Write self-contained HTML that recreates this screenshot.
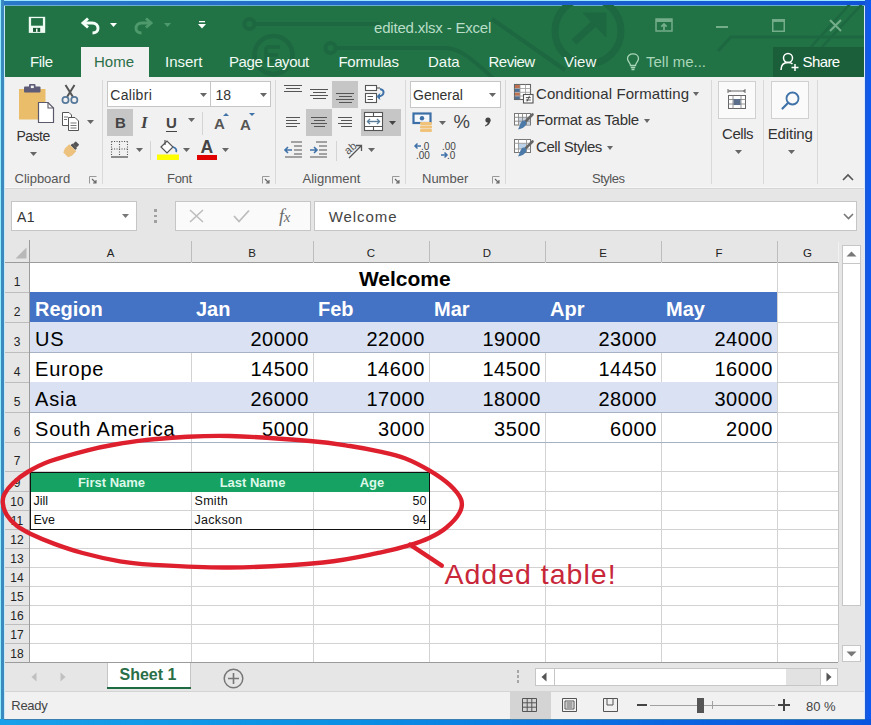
<!DOCTYPE html><html><head><meta charset="utf-8"><style>
*{margin:0;padding:0;box-sizing:border-box}
html,body{width:871px;height:725px;overflow:hidden}
body{position:relative;font-family:"Liberation Sans",sans-serif;background:#1a7fe0}
.t{position:absolute;line-height:1;white-space:nowrap}
.r{position:absolute}
svg{position:absolute;overflow:visible}
</style></head><body><div class="r" style="left:0px;top:0px;width:871px;height:5px;background:linear-gradient(90deg,#2a78c8,#1f66c8 50%,#0f52d8);"></div>
<div class="r" style="left:0px;top:0px;width:871px;height:1px;background:#9ee8ff;"></div>
<div class="r" style="left:0px;top:0px;width:4px;height:725px;background:#3a8ac0;"></div>
<div class="r" style="left:0px;top:0px;width:1px;height:725px;background:#90ecff;"></div>
<div class="r" style="left:865px;top:0px;width:6px;height:725px;background:linear-gradient(90deg,#1a5ad8,#0a5af8);"></div>
<div class="r" style="left:0px;top:719px;width:871px;height:6px;background:linear-gradient(90deg,#18a0ea,#0a90e4 40%,#0a62e0 80%,#0a55e0);"></div>
<div class="r" style="left:4px;top:719px;width:861px;height:1px;background:#3a7fb0;"></div>
<div class="r" style="left:4px;top:5px;width:861px;height:714px;background:#f1f1f1;"></div>
<div class="r" style="left:4px;top:5px;width:1px;height:714px;background:#c8e8f8;"></div>
<div class="r" style="left:864px;top:5px;width:1px;height:714px;background:#d8e8fc;"></div>
<div class="r" style="left:5px;top:6px;width:859px;height:71px;background:#217346;"></div>
<div class="r" style="left:4px;top:5px;width:861px;height:1px;background:#6aaed0;"></div>
<svg style="left:0;top:0" width="871" height="77" viewBox="0 0 871 77">
<defs><clipPath id="tb"><rect x="4" y="5" width="860" height="72"/></clipPath></defs>
<g fill="none" stroke="#1d6840" stroke-width="4" clip-path="url(#tb)">
<circle cx="249.5" cy="24" r="5"/>
<line x1="254.5" y1="24" x2="380" y2="24"/>
<circle cx="330.5" cy="48" r="5"/>
<path d="M335.5 48 H444 C458 48 468 56 483 69 L495 80"/>
<path d="M492 19 L565 70"/>
<circle cx="273.5" cy="55" r="19" stroke-width="4.5"/>
<path d="M266 47 h14 M266 55 h12 M266 47 v14 h14" stroke-width="3.5"/>
<circle cx="588" cy="31" r="33" stroke-width="7"/>
<path d="M574 42 L598 20" stroke-width="7"/>
<path d="M583 13 H606 V37 Z" fill="#1d6840" stroke-width="1"/>
<path d="M718 51 L731 37 H864" stroke-width="3"/>
<path d="M811 47 L850 4 M822 47 L862 4" stroke-width="2.5"/>
</g></svg>
<svg style="left:28px;top:16px" width="18" height="18" viewBox="0 0 18 18">
<rect x="0.8" y="0.8" width="16.4" height="16.1" fill="#eefbf2"/>
<rect x="3.1" y="2.1" width="11.8" height="7.6" fill="#217346"/>
<rect x="5" y="11.9" width="7.2" height="4" fill="#1b5a37"/>
<rect x="8" y="12.6" width="1.5" height="3.3" fill="#eefbf2"/>
</svg>
<svg style="left:80px;top:17px" width="20" height="17" viewBox="0 0 20 17">
<path d="M4 6 H12 C16 6 18 8.5 18 11.5 C18 14.5 15.5 16 12.5 16" fill="none" stroke="#f4fff8" stroke-width="2.9"/>
<path d="M8 1.5 L3 6 L8 10.5" fill="none" stroke="#f4fff8" stroke-width="2.9"/>
</svg>
<svg style="left:110px;top:22.5px" width="7" height="5" viewBox="0 0 7 5"><path d="M0 0 H7 L3.5 4 Z" fill="#fff"/></svg>
<svg style="left:134px;top:17px" width="20" height="17" viewBox="0 0 20 17">
<path d="M16 6 H8 C4 6 2 8.5 2 11.5 C2 14.5 4.5 16 7.5 16" fill="none" stroke="#4f9a6c" stroke-width="2.9"/>
<path d="M12 1.5 L17 6 L12 10.5" fill="none" stroke="#4f9a6c" stroke-width="2.9"/>
</svg>
<svg style="left:164px;top:22.5px" width="7" height="5" viewBox="0 0 7 5"><path d="M0 0 H7 L3.5 4 Z" fill="#4f9a6c"/></svg>
<svg style="left:198px;top:21px" width="8" height="8" viewBox="0 0 8 8"><rect x="1" y="0" width="6" height="1.3" fill="#fff"/><path d="M0 3 H8 L4 7.5 Z" fill="#fff"/></svg>
<div class="t" style="top:20.30px;font-size:15px;color:#b9ddc6;font-weight:normal;letter-spacing:-0.2px;left:374px;">edited.xlsx - Excel</div>
<svg style="left:655px;top:18px" width="18" height="14" viewBox="0 0 18 14">
<rect x="1" y="1" width="16" height="12" fill="none" stroke="#74ad8a" stroke-width="1.5"/>
<rect x="1" y="1" width="16" height="3" fill="#74ad8a"/>
<path d="M9 6 V12 M6.3 8.7 L9 6 L11.7 8.7" fill="none" stroke="#74ad8a" stroke-width="1.8"/>
</svg>
<div class="r" style="left:715.5px;top:26.3px;width:12px;height:2px;background:#74ad8a;"></div>
<svg style="left:771.5px;top:18.5px" width="13" height="13" viewBox="0 0 13 13"><rect x="0.75" y="0.75" width="11.5" height="11.5" fill="none" stroke="#74ad8a" stroke-width="1.5"/><rect x="0.75" y="0.75" width="11.5" height="2.2" fill="#74ad8a"/></svg>
<svg style="left:828.5px;top:18.5px" width="13" height="13" viewBox="0 0 13 13"><path d="M1 1 L12 12 M12 1 L1 12" stroke="#74ad8a" stroke-width="2"/></svg>
<div class="r" style="left:81px;top:47px;width:68px;height:30px;background:#f1f1f1;"></div>
<div class="t" style="top:54.30px;font-size:15px;color:#f2faf4;font-weight:normal;letter-spacing:-0.4px;left:30px;">File</div>
<div class="t" style="top:54.30px;font-size:15px;color:#2b6e47;font-weight:normal;left:94px;">Home</div>
<div class="t" style="top:54.30px;font-size:15px;color:#f2faf4;font-weight:normal;left:165px;">Insert</div>
<div class="t" style="top:54.30px;font-size:15px;color:#f2faf4;font-weight:normal;letter-spacing:-0.4px;left:229px;">Page Layout</div>
<div class="t" style="top:54.30px;font-size:15px;color:#f2faf4;font-weight:normal;letter-spacing:-0.3px;left:338.5px;">Formulas</div>
<div class="t" style="top:54.30px;font-size:15px;color:#f2faf4;font-weight:normal;left:428px;">Data</div>
<div class="t" style="top:54.30px;font-size:15px;color:#f2faf4;font-weight:normal;letter-spacing:-0.5px;left:488.5px;">Review</div>
<div class="t" style="top:54.30px;font-size:15px;color:#f2faf4;font-weight:normal;left:564px;">View</div>
<svg style="left:626px;top:53px" width="14" height="18" viewBox="0 0 14 18">
<path d="M4.5 12.5 C4.5 10 1.5 8.5 1.5 5.5 C1.5 2.8 3.8 0.8 7 0.8 C10.2 0.8 12.5 2.8 12.5 5.5 C12.5 8.5 9.5 10 9.5 12.5 Z" fill="none" stroke="#a9d6b8" stroke-width="1.3"/>
<path d="M4.8 14.5 H9.2 M5.5 16.5 H8.5" stroke="#a9d6b8" stroke-width="1.3"/>
</svg>
<div class="t" style="top:54.30px;font-size:15px;color:#a9d6b8;font-weight:normal;left:646px;">Tell me...</div>
<div class="r" style="left:773px;top:47px;width:91px;height:30px;background:#1b5f3a;"></div>
<svg style="left:780px;top:52px" width="20" height="20" viewBox="0 0 20 20">
<circle cx="8" cy="6" r="4.5" fill="none" stroke="#fff" stroke-width="1.5"/>
<path d="M1 18 C1 13 4 10.5 8 10.5 C10 10.5 11.5 11 12.5 12" fill="none" stroke="#fff" stroke-width="1.5"/>
<path d="M15 12 V19 M11.5 15.5 H18.5" stroke="#fff" stroke-width="1.5"/>
</svg>
<div class="t" style="top:54.30px;font-size:15px;color:#ffffff;font-weight:normal;letter-spacing:-0.6px;left:802.5px;">Share</div>
<div class="r" style="left:5px;top:189px;width:859px;height:53px;background:#e6e6e6;"></div>
<div class="r" style="left:5px;top:187px;width:859px;height:1px;background:#f7f7f7;"></div>
<div class="r" style="left:5px;top:188px;width:859px;height:1px;background:#d5d5d5;"></div>
<div class="r" style="left:102px;top:80px;width:1px;height:104px;background:#d9d9d9;"></div>
<div class="r" style="left:275px;top:80px;width:1px;height:104px;background:#d9d9d9;"></div>
<div class="r" style="left:405px;top:80px;width:1px;height:104px;background:#d9d9d9;"></div>
<div class="r" style="left:505px;top:80px;width:1px;height:104px;background:#d9d9d9;"></div>
<div class="r" style="left:711px;top:80px;width:1px;height:104px;background:#d9d9d9;"></div>
<div class="r" style="left:763px;top:80px;width:1px;height:104px;background:#d9d9d9;"></div>
<div class="r" style="left:817px;top:80px;width:1px;height:104px;background:#d9d9d9;"></div>
<div class="t" style="top:172.00px;font-size:13px;color:#555;font-weight:normal;left:14.5px;">Clipboard</div>
<div class="t" style="top:172.00px;font-size:13px;color:#555;font-weight:normal;letter-spacing:-0.3px;left:167px;">Font</div>
<div class="t" style="top:172.00px;font-size:13px;color:#555;font-weight:normal;left:302.5px;">Alignment</div>
<div class="t" style="top:172.00px;font-size:13px;color:#555;font-weight:normal;left:422px;">Number</div>
<div class="t" style="top:172.00px;font-size:13px;color:#555;font-weight:normal;letter-spacing:-0.5px;left:592px;">Styles</div>
<div class="t" style="top:182.15px;font-size:1px;color:#555;font-weight:normal;left:92px;"></div>
<svg style="left:89px;top:176px" width="8" height="8" viewBox="0 0 8 8"><path d="M0.5 7.5 V0.5 H7.5" fill="none" stroke="#999" stroke-width="1"/><path d="M3 3 L7 7 M7 4 V7 H4" fill="none" stroke="#666" stroke-width="1.1"/></svg>
<svg style="left:262px;top:176px" width="8" height="8" viewBox="0 0 8 8"><path d="M0.5 7.5 V0.5 H7.5" fill="none" stroke="#999" stroke-width="1"/><path d="M3 3 L7 7 M7 4 V7 H4" fill="none" stroke="#666" stroke-width="1.1"/></svg>
<svg style="left:392px;top:176px" width="8" height="8" viewBox="0 0 8 8"><path d="M0.5 7.5 V0.5 H7.5" fill="none" stroke="#999" stroke-width="1"/><path d="M3 3 L7 7 M7 4 V7 H4" fill="none" stroke="#666" stroke-width="1.1"/></svg>
<svg style="left:492px;top:176px" width="8" height="8" viewBox="0 0 8 8"><path d="M0.5 7.5 V0.5 H7.5" fill="none" stroke="#999" stroke-width="1"/><path d="M3 3 L7 7 M7 4 V7 H4" fill="none" stroke="#666" stroke-width="1.1"/></svg>
<svg style="left:18px;top:84px" width="37" height="40" viewBox="0 0 37 40">
<rect x="1" y="5" width="26.5" height="30.5" fill="#e9bd6a"/>
<rect x="6" y="2.5" width="16.5" height="6" rx="1" fill="#5e5b78"/>
<rect x="11" y="0" width="6.5" height="5" rx="1" fill="#5e5b78"/>
<rect x="12.8" y="1.6" width="3" height="2.5" fill="#f3f3f3"/>
<path d="M20.5 18.5 H30 L35.5 24 V38.5 H20.5 Z" fill="#ffffff" stroke="#5a5a6a" stroke-width="1.2"/>
<path d="M30 18.5 V24 H35.5" fill="none" stroke="#5a5a6a" stroke-width="1.1"/>
</svg>
<div class="t" style="top:128.65px;font-size:14px;color:#333;font-weight:normal;letter-spacing:-0.5px;left:16.5px;">Paste</div>
<svg style="left:30px;top:152px" width="7" height="4" viewBox="0 0 7 4"><path d="M0 0 H7 L3.5 4 Z" fill="#666"/></svg>
<svg style="left:61px;top:84px" width="18" height="20" viewBox="0 0 18 20">
<path d="M4.5 1 L12 13 M13.5 1 L6 13" stroke="#555" stroke-width="2"/>
<circle cx="4.5" cy="16" r="3.1" fill="none" stroke="#56789a" stroke-width="1.7"/>
<circle cx="13.3" cy="16" r="3.1" fill="none" stroke="#56789a" stroke-width="1.7"/>
</svg>
<svg style="left:62px;top:112px" width="18" height="19" viewBox="0 0 18 19">
<path d="M0.5 0.5 H7 L9.5 3 V13.5 H0.5 Z" fill="#fff" stroke="#555" stroke-width="1"/>
<path d="M6.5 5.5 H13 L16.5 9 V18.5 H6.5 Z" fill="#fff" stroke="#555" stroke-width="1"/>
<path d="M2 5 H6 M2 7.5 H5 M8.5 11 H14.5 M8.5 13.5 H14.5 M8.5 16 H14.5" stroke="#666" stroke-width="0.9"/>
</svg>
<svg style="left:87px;top:120px" width="7" height="4" viewBox="0 0 7 4"><path d="M0 0 H7 L3.5 4 Z" fill="#666"/></svg>
<svg style="left:63px;top:142px" width="16" height="15" viewBox="0 0 19 18">
<g transform="rotate(45 9.5 9)">
<rect x="6.5" y="-2" width="6" height="5" rx="0.8" fill="#555"/>
<rect x="5.5" y="2.8" width="8" height="3" fill="#555"/>
<path d="M3.5 6 H15.5 V13.5 L13.5 18 H5.5 L3.5 13.5 Z" fill="#ecc27e"/>
</g>
</svg>
<div class="r" style="left:107px;top:81px;width:104px;height:26px;background:#ffffff;border:1px solid #c6c6c6;"></div>
<div class="r" style="left:210px;top:81px;width:61px;height:26px;background:#ffffff;border:1px solid #c6c6c6;"></div>
<div class="t" style="top:88.15px;font-size:14px;color:#333;font-weight:normal;letter-spacing:0.3px;left:110.3px;">Calibri</div>
<svg style="left:200px;top:93px" width="7" height="4" viewBox="0 0 7 4"><path d="M0 0 H7 L3.5 4 Z" fill="#666"/></svg>
<div class="t" style="top:88.15px;font-size:14px;color:#333;font-weight:normal;left:215.5px;">18</div>
<svg style="left:259.5px;top:93px" width="7" height="4" viewBox="0 0 7 4"><path d="M0 0 H7 L3.5 4 Z" fill="#666"/></svg>
<div class="r" style="left:107px;top:109px;width:26px;height:27px;background:#c6c6c6;"></div>
<div class="t" style="top:115.10px;font-size:15px;color:#444;font-weight:bold;left:115px;">B</div>
<div class="t" style="top:113.61px;font-size:17px;color:#444;font-weight:bold;left:141px;font-family:'Liberation Serif',serif;"><i>I</i></div>
<div class="t" style="top:115.10px;font-size:15px;color:#444;font-weight:bold;left:166px;">U</div>
<div class="r" style="left:166px;top:130.5px;width:11px;height:1.5px;background:#444;"></div>
<svg style="left:188px;top:118px" width="7" height="4" viewBox="0 0 7 4"><path d="M0 0 H7 L3.5 4 Z" fill="#666"/></svg>
<div class="r" style="left:202px;top:112px;width:1px;height:23px;background:#d4d4d4;"></div>
<div class="t" style="top:115.80px;font-size:15px;color:#555;font-weight:bold;left:214px;">A</div>
<svg style="left:223px;top:113px" width="6" height="3" viewBox="0 0 6 3"><path d="M0 3 H6 L3 0 Z" fill="#3f72a8"/></svg>
<div class="t" style="top:116.80px;font-size:15px;color:#555;font-weight:bold;left:240px;">A</div>
<svg style="left:249px;top:113px" width="6" height="3" viewBox="0 0 6 3"><path d="M0 0 H6 L3 3 Z" fill="#3f72a8"/></svg>
<svg style="left:110px;top:140px" width="19" height="18" viewBox="0 0 19 18">
<path d="M1.5 1.5 H17.5 M1.5 1.5 V16.5 M17.5 1.5 V16.5 M9.5 1.5 V16.5 M1.5 9 H17.5" fill="none" stroke="#555" stroke-width="1.1" stroke-dasharray="1.1 1.4"/>
<path d="M1 17 H18" stroke="#555" stroke-width="1.3"/>
</svg>
<svg style="left:135.5px;top:148px" width="7" height="4" viewBox="0 0 7 4"><path d="M0 0 H7 L3.5 4 Z" fill="#666"/></svg>
<div class="r" style="left:150px;top:141px;width:1px;height:19px;background:#d4d4d4;"></div>
<svg style="left:157px;top:139px" width="23" height="22" viewBox="0 0 23 22">
<path d="M4 8 L10 2 L16 8 L10 14 Z" fill="#fff" stroke="#555" stroke-width="1.2"/>
<path d="M8 1 V6" stroke="#555" stroke-width="1.2"/>
<path d="M16 8 C19 9 20 11 19 13" fill="none" stroke="#3f72a8" stroke-width="1.8"/>
<rect x="0" y="15.5" width="22" height="5.5" fill="#ffff00"/>
</svg>
<svg style="left:183px;top:148px" width="7" height="4" viewBox="0 0 7 4"><path d="M0 0 H7 L3.5 4 Z" fill="#666"/></svg>
<div class="t" style="top:138.69px;font-size:17.5px;color:#444;font-weight:bold;left:200.5px;">A</div>
<div class="r" style="left:197px;top:155px;width:20px;height:5px;background:#e00000;"></div>
<svg style="left:222px;top:148px" width="7" height="4" viewBox="0 0 7 4"><path d="M0 0 H7 L3.5 4 Z" fill="#666"/></svg>
<div class="r" style="left:332px;top:81px;width:26px;height:27px;background:#c6c6c6;"></div>
<div class="r" style="left:306px;top:109px;width:26px;height:27px;background:#c6c6c6;"></div>
<div class="r" style="left:361px;top:109px;width:40px;height:27px;background:#c6c6c6;"></div>
<div class="r" style="left:284px;top:85.0px;width:18px;height:1.2px;background:#555;"></div>
<div class="r" style="left:286px;top:88.1px;width:14px;height:1.2px;background:#555;"></div>
<div class="r" style="left:284px;top:91.2px;width:18px;height:1.2px;background:#555;"></div>
<div class="r" style="left:310px;top:89.0px;width:18px;height:1.2px;background:#555;"></div>
<div class="r" style="left:312.5px;top:92.05px;width:13px;height:1.2px;background:#555;"></div>
<div class="r" style="left:310px;top:95.1px;width:18px;height:1.2px;background:#555;"></div>
<div class="r" style="left:312.5px;top:98.15px;width:13px;height:1.2px;background:#555;"></div>
<div class="r" style="left:336px;top:93.0px;width:18px;height:1.2px;background:#555;"></div>
<div class="r" style="left:338.5px;top:96.05px;width:13px;height:1.2px;background:#555;"></div>
<div class="r" style="left:336px;top:99.1px;width:18px;height:1.2px;background:#555;"></div>
<div class="r" style="left:338.5px;top:102.15px;width:13px;height:1.2px;background:#555;"></div>
<svg style="left:364px;top:84px" width="22" height="20" viewBox="0 0 22 20">
<rect x="1.5" y="1.5" width="11" height="5" fill="#fff" stroke="#555" stroke-width="1.1"/>
<rect x="1.5" y="9.5" width="11" height="9" fill="#fff" stroke="#555" stroke-width="1.1"/>
<path d="M12.5 4 H16" stroke="#555" stroke-width="1.1"/>
<path d="M3.5 12.5 H9 M3.5 15.5 H9" stroke="#555" stroke-width="1"/>
<path d="M16 5 C21 6 21 12 14 12.5" fill="none" stroke="#3f72a8" stroke-width="2"/>
<path d="M16 9.5 L13 12.5 L16 15.5" fill="#3f72a8" stroke="#3f72a8" stroke-width="1"/>
</svg>
<div class="r" style="left:286px;top:117.0px;width:14px;height:1.2px;background:#555;"></div>
<div class="r" style="left:286px;top:120.05px;width:11px;height:1.2px;background:#555;"></div>
<div class="r" style="left:286px;top:123.1px;width:14px;height:1.2px;background:#555;"></div>
<div class="r" style="left:286px;top:126.15px;width:11px;height:1.2px;background:#555;"></div>
<div class="r" style="left:311px;top:117.0px;width:16px;height:1.2px;background:#555;"></div>
<div class="r" style="left:313.5px;top:120.05px;width:11px;height:1.2px;background:#555;"></div>
<div class="r" style="left:311px;top:123.1px;width:16px;height:1.2px;background:#555;"></div>
<div class="r" style="left:313.5px;top:126.15px;width:11px;height:1.2px;background:#555;"></div>
<div class="r" style="left:338px;top:117.0px;width:14px;height:1.2px;background:#555;"></div>
<div class="r" style="left:341px;top:120.05px;width:11px;height:1.2px;background:#555;"></div>
<div class="r" style="left:338px;top:123.1px;width:14px;height:1.2px;background:#555;"></div>
<div class="r" style="left:341px;top:126.15px;width:11px;height:1.2px;background:#555;"></div>
<svg style="left:364px;top:112px" width="20" height="19" viewBox="0 0 20 19">
<rect x="0.5" y="0.5" width="18" height="18" fill="#fff" stroke="#555" stroke-width="1.1"/>
<path d="M0.5 4.5 H18.5 M0.5 14.5 H18.5 M9.5 0.5 V4.5 M9.5 14.5 V18.5" stroke="#555" stroke-width="1.1"/>
<path d="M3.5 9.5 H15.5" stroke="#5a7f9c" stroke-width="1.4"/>
<path d="M6 7 L3.5 9.5 L6 12 M13 7 L15.5 9.5 L13 12" fill="none" stroke="#5a7f9c" stroke-width="1.4"/>
</svg>
<svg style="left:389px;top:121px" width="7" height="4" viewBox="0 0 7 4"><path d="M0 0 H7 L3.5 4 Z" fill="#444"/></svg>
<svg style="left:284px;top:141px" width="19" height="17" viewBox="0 0 19 17">
<path d="M7 1 H18 M10 5 H18 M10 9 H18 M10 13 H18 M1 16 H18" stroke="#555" stroke-width="1.1"/>
<path d="M1 9 H8 M4 6 L1 9 L4 12" fill="none" stroke="#3f72a8" stroke-width="1.6"/>
</svg>
<svg style="left:309px;top:141px" width="19" height="17" viewBox="0 0 19 17">
<path d="M7 1 H18 M10 5 H18 M10 9 H18 M10 13 H18 M1 16 H18" stroke="#555" stroke-width="1.1"/>
<path d="M1 9 H8 M5 6 L8 9 L5 12" fill="none" stroke="#3f72a8" stroke-width="1.6"/>
</svg>
<div class="r" style="left:336px;top:141px;width:1px;height:20px;background:#d4d4d4;"></div>
<svg style="left:344px;top:140px" width="21" height="20" viewBox="0 0 21 20">
<text x="0" y="12" font-family="Liberation Sans" font-size="11" fill="#555" transform="rotate(-40 6 8)">ab</text>
<path d="M5 18 L17 6 M12 5.5 H17.5 V11" fill="none" stroke="#555" stroke-width="1.3"/>
</svg>
<svg style="left:368px;top:148px" width="7" height="4" viewBox="0 0 7 4"><path d="M0 0 H7 L3.5 4 Z" fill="#666"/></svg>
<div class="r" style="left:410px;top:81px;width:91px;height:27px;background:#ffffff;border:1px solid #c6c6c6;"></div>
<div class="t" style="top:88.15px;font-size:14px;color:#333;font-weight:normal;left:413px;">General</div>
<svg style="left:489px;top:93px" width="7" height="4" viewBox="0 0 7 4"><path d="M0 0 H7 L3.5 4 Z" fill="#666"/></svg>
<svg style="left:412px;top:112px" width="22" height="21" viewBox="0 0 22 21">
<rect x="1.5" y="1.5" width="17" height="9.5" fill="#f4f7fb" stroke="#3c6fa6" stroke-width="2.2"/>
<circle cx="10" cy="6.3" r="2.2" fill="#3c6fa6"/>
<rect x="8" y="10" width="12" height="3" rx="1.2" fill="#f1c27a"/>
<rect x="8" y="13.5" width="12" height="3" rx="1.2" fill="#f1c27a"/>
<rect x="8" y="17" width="12" height="3" rx="1.2" fill="#f1c27a"/>
</svg>
<svg style="left:439px;top:121px" width="7" height="4" viewBox="0 0 7 4"><path d="M0 0 H7 L3.5 4 Z" fill="#666"/></svg>
<div class="t" style="top:113.34px;font-size:18.5px;color:#444;font-weight:normal;left:453.5px;">%</div>
<svg style="left:484px;top:117px" width="7" height="10" viewBox="0 0 7 10"><circle cx="4" cy="3" r="2.6" fill="#444"/><path d="M6.4 3 C6.4 6.5 4.5 8.5 1.2 9.6 L1 8.5 C3 7.5 4 6 4 4.5 Z" fill="#444"/></svg>
<svg style="left:414px;top:141px" width="17" height="19" viewBox="0 0 17 19">
<path d="M1 5 H7 M3.5 2.5 L1 5 L3.5 7.5" fill="none" stroke="#3f72a8" stroke-width="1.5"/>
<text x="7" y="9" font-family="Liberation Sans" font-size="10" fill="#444">.0</text>
<text x="2" y="18" font-family="Liberation Sans" font-size="10" fill="#444">.00</text>
</svg>
<svg style="left:440px;top:141px" width="17" height="19" viewBox="0 0 17 19">
<text x="2" y="9" font-family="Liberation Sans" font-size="10" fill="#444">.00</text>
<path d="M1 14 H7 M4.5 11.5 L7 14 L4.5 16.5" fill="none" stroke="#3f72a8" stroke-width="1.5"/>
<text x="7" y="18" font-family="Liberation Sans" font-size="10" fill="#444">.0</text>
</svg>
<svg style="left:513px;top:83px" width="21" height="21" viewBox="0 0 21 21">
<rect x="1.5" y="1.5" width="16" height="15" fill="#fff" stroke="#666" stroke-width="1.1"/>
<rect x="2" y="2" width="5" height="3.2" fill="#c0714f"/>
<rect x="2" y="5.8" width="5" height="3.2" fill="#4f7196"/>
<rect x="2" y="9.6" width="5" height="3.2" fill="#c0714f"/>
<rect x="2" y="13.2" width="5" height="3" fill="#4f7196"/>
<path d="M7 1.5 V16.5 M12.5 1.5 V16.5 M1.5 5.5 H17.5 M1.5 9.3 H17.5 M1.5 13 H17.5" stroke="#999" stroke-width="0.8"/>
<rect x="10.5" y="11.5" width="9.5" height="8.5" fill="#fff" stroke="#555" stroke-width="1.1"/>
<path d="M12.8 14.6 H17.8 M12.8 17 H17.8 M16.5 12.8 L14 18.5" stroke="#444" stroke-width="0.9"/>
</svg>
<div class="t" style="top:85.60px;font-size:15px;color:#333;font-weight:normal;letter-spacing:0.1px;left:536px;">Conditional Formatting</div>
<svg style="left:693px;top:92px" width="6" height="4" viewBox="0 0 6 4"><path d="M0 0 H6 L3.0 4 Z" fill="#666"/></svg>
<svg style="left:513px;top:112px" width="21" height="19" viewBox="0 0 21 19">
<rect x="1.5" y="1.5" width="16" height="11.5" fill="#fff" stroke="#777" stroke-width="1"/>
<rect x="6" y="5.5" width="11" height="7" fill="#c9d3e0"/>
<path d="M1.5 5.3 H17.5 M1.5 9.2 H17.5 M5.5 1.5 V13 M9.5 1.5 V13 M13.5 1.5 V13" stroke="#888" stroke-width="0.9"/>
<path d="M19.5 2.5 L12 10" stroke="#666" stroke-width="2.6" stroke-linecap="round"/>
<path d="M12.8 9 L10 8.5 C7 10.5 7 14 5 17.5 C9 17 12 15 13.5 12 Z" fill="#4b7aa8"/>
</svg>
<div class="t" style="top:112.30px;font-size:15px;color:#333;font-weight:normal;letter-spacing:-0.3px;left:536px;">Format as Table</div>
<svg style="left:643.5px;top:119px" width="6" height="4" viewBox="0 0 6 4"><path d="M0 0 H6 L3.0 4 Z" fill="#666"/></svg>
<svg style="left:513px;top:138px" width="21" height="20" viewBox="0 0 21 20">
<rect x="1.5" y="1.5" width="16" height="13" fill="#fff" stroke="#777" stroke-width="1"/>
<rect x="5.5" y="5.5" width="8" height="5.5" fill="#bcd2e8"/>
<path d="M1.5 5.3 H17.5 M1.5 11 H17.5 M5.5 1.5 V14.5 M13.5 1.5 V14.5" stroke="#999" stroke-width="0.9"/>
<path d="M19.5 3.5 L12 11" stroke="#666" stroke-width="2.6" stroke-linecap="round"/>
<path d="M12.8 10 L10 9.5 C7 11.5 7 15 5 18.5 C9 18 12 16 13.5 13 Z" fill="#4b7aa8"/>
</svg>
<div class="t" style="top:138.60px;font-size:15px;color:#333;font-weight:normal;letter-spacing:-0.45px;left:536px;">Cell Styles</div>
<svg style="left:607px;top:146px" width="6" height="4" viewBox="0 0 6 4"><path d="M0 0 H6 L3.0 4 Z" fill="#666"/></svg>
<div class="r" style="left:718px;top:81px;width:38px;height:38px;background:#fafafa;border:1px solid #d0d0d0;"></div>
<svg style="left:726px;top:89px" width="22" height="22" viewBox="0 0 22 22">
<path d="M2 2 H19 M2 0 V4 M19 0 V4" stroke="#666" stroke-width="1"/>
<path d="M5 2 L3 2 M17 2 L19 2" stroke="#666" stroke-width="1"/>
<rect x="2.5" y="6.5" width="17" height="13" fill="#fff" stroke="#666" stroke-width="1"/>
<path d="M2.5 10.5 H19.5 M2.5 15 H19.5 M7 6.5 V19.5 M15 6.5 V19.5" stroke="#888" stroke-width="0.9"/>
<rect x="7.5" y="10" width="7" height="6" fill="#5b6f8c"/>
</svg>
<div class="t" style="top:126.30px;font-size:15px;color:#333;font-weight:normal;letter-spacing:-0.45px;left:722px;">Cells</div>
<svg style="left:734.5px;top:150px" width="7" height="4" viewBox="0 0 7 4"><path d="M0 0 H7 L3.5 4 Z" fill="#666"/></svg>
<div class="r" style="left:771px;top:81px;width:38px;height:38px;background:#fafafa;border:1px solid #d0d0d0;"></div>
<svg style="left:781px;top:91px" width="20" height="20" viewBox="0 0 20 20">
<circle cx="11.5" cy="7.5" r="6" fill="none" stroke="#3f72a8" stroke-width="1.8"/>
<path d="M7.2 11.8 L1.5 17.5" stroke="#3f72a8" stroke-width="2.2" stroke-linecap="round"/>
</svg>
<div class="t" style="top:126.30px;font-size:15px;color:#333;font-weight:normal;letter-spacing:-0.1px;left:767.7px;">Editing</div>
<svg style="left:787.5px;top:150px" width="7" height="4" viewBox="0 0 7 4"><path d="M0 0 H7 L3.5 4 Z" fill="#666"/></svg>
<svg style="left:842px;top:174px" width="12" height="7" viewBox="0 0 12 7"><path d="M1 6 L6 1 L11 6" fill="none" stroke="#555" stroke-width="1.6"/></svg>
<div class="r" style="left:11px;top:201px;width:126px;height:30px;background:#ffffff;border:1px solid #c6c6c6;"></div>
<div class="t" style="top:209.95px;font-size:14px;color:#333;font-weight:normal;letter-spacing:0.5px;left:17px;">A1</div>
<svg style="left:121.5px;top:214px" width="7" height="4" viewBox="0 0 7 4"><path d="M0 0 H7 L3.5 4 Z" fill="#777"/></svg>
<div class="r" style="left:154.3px;top:209.3px;width:2.6px;height:2.6px;background:#a0a0a0;"></div>
<div class="r" style="left:154.3px;top:214.8px;width:2.6px;height:2.6px;background:#a0a0a0;"></div>
<div class="r" style="left:154.3px;top:220.3px;width:2.6px;height:2.6px;background:#a0a0a0;"></div>
<div class="r" style="left:175px;top:201px;width:136px;height:30px;background:#fafafa;border:1px solid #c6c6c6;"></div>
<svg style="left:189px;top:209px" width="15" height="14" viewBox="0 0 15 14"><path d="M1 1 L14 13 M14 1 L1 13" stroke="#bdbdbd" stroke-width="1.6"/></svg>
<svg style="left:233px;top:209px" width="17" height="14" viewBox="0 0 17 14"><path d="M1 7 L6 12.5 L16 1.5" fill="none" stroke="#bdbdbd" stroke-width="1.8"/></svg>
<div class="t" style="top:207.26px;font-size:18px;color:#6a6a6a;font-weight:normal;letter-spacing:-0.3px;left:279px;font-family:'Liberation Serif',serif;"><i>f</i><i style="font-size:15px">x</i></div>
<div class="r" style="left:314px;top:201px;width:543px;height:30px;background:#ffffff;border:1px solid #c6c6c6;"></div>
<div class="t" style="top:209.30px;font-size:15px;color:#444;font-weight:normal;letter-spacing:0.95px;left:328.7px;">Welcome</div>
<svg style="left:843px;top:213px" width="11" height="7" viewBox="0 0 11 7"><path d="M1 1 L5.5 5.5 L10 1" fill="none" stroke="#777" stroke-width="1.6"/></svg>
<div class="r" style="left:30px;top:262px;width:808px;height:400px;background:#ffffff;"></div>
<div class="r" style="left:5px;top:240px;width:833px;height:22px;background:#e6e6e6;"></div>
<div class="r" style="left:5px;top:262px;width:25px;height:400px;background:#e6e6e6;"></div>
<svg style="left:15px;top:247px" width="12" height="12" viewBox="0 0 12 12"><path d="M11.5 0.5 V11.5 H0.5 Z" fill="#b8b8b8"/></svg>
<div class="r" style="left:5px;top:262px;width:833px;height:1px;background:#9b9b9b;"></div>
<div class="r" style="left:29px;top:240px;width:1px;height:422px;background:#9b9b9b;"></div>
<div class="r" style="left:191px;top:241px;width:1px;height:21px;background:#bdbdbd;"></div>
<div class="r" style="left:313px;top:241px;width:1px;height:21px;background:#bdbdbd;"></div>
<div class="r" style="left:429px;top:241px;width:1px;height:21px;background:#bdbdbd;"></div>
<div class="r" style="left:545px;top:241px;width:1px;height:21px;background:#bdbdbd;"></div>
<div class="r" style="left:661px;top:241px;width:1px;height:21px;background:#bdbdbd;"></div>
<div class="r" style="left:777px;top:241px;width:1px;height:21px;background:#bdbdbd;"></div>
<div class="t" style="top:248.27px;font-size:11.5px;color:#222;font-weight:normal;left:-189.5px;width:600px;text-align:center;">A</div>
<div class="t" style="top:248.27px;font-size:11.5px;color:#222;font-weight:normal;left:-48.0px;width:600px;text-align:center;">B</div>
<div class="t" style="top:248.27px;font-size:11.5px;color:#222;font-weight:normal;left:71.0px;width:600px;text-align:center;">C</div>
<div class="t" style="top:248.27px;font-size:11.5px;color:#222;font-weight:normal;left:187.0px;width:600px;text-align:center;">D</div>
<div class="t" style="top:248.27px;font-size:11.5px;color:#222;font-weight:normal;left:303.0px;width:600px;text-align:center;">E</div>
<div class="t" style="top:248.27px;font-size:11.5px;color:#222;font-weight:normal;left:419.0px;width:600px;text-align:center;">F</div>
<div class="t" style="top:248.27px;font-size:11.5px;color:#222;font-weight:normal;left:507.5px;width:600px;text-align:center;">G</div>
<div class="r" style="left:5px;top:292px;width:24px;height:1px;background:#bdbdbd;"></div>
<div class="t" style="top:275.54px;font-size:12px;color:#222;font-weight:normal;left:-283px;width:600px;text-align:center;">1</div>
<div class="r" style="left:5px;top:322px;width:24px;height:1px;background:#bdbdbd;"></div>
<div class="t" style="top:305.54px;font-size:12px;color:#222;font-weight:normal;left:-283px;width:600px;text-align:center;">2</div>
<div class="r" style="left:5px;top:352px;width:24px;height:1px;background:#bdbdbd;"></div>
<div class="t" style="top:335.54px;font-size:12px;color:#222;font-weight:normal;left:-283px;width:600px;text-align:center;">3</div>
<div class="r" style="left:5px;top:382px;width:24px;height:1px;background:#bdbdbd;"></div>
<div class="t" style="top:365.54px;font-size:12px;color:#222;font-weight:normal;left:-283px;width:600px;text-align:center;">4</div>
<div class="r" style="left:5px;top:412px;width:24px;height:1px;background:#bdbdbd;"></div>
<div class="t" style="top:395.54px;font-size:12px;color:#222;font-weight:normal;left:-283px;width:600px;text-align:center;">5</div>
<div class="r" style="left:5px;top:442px;width:24px;height:1px;background:#bdbdbd;"></div>
<div class="t" style="top:425.54px;font-size:12px;color:#222;font-weight:normal;left:-283px;width:600px;text-align:center;">6</div>
<div class="r" style="left:5px;top:471px;width:24px;height:1px;background:#bdbdbd;"></div>
<div class="t" style="top:454.54px;font-size:12px;color:#222;font-weight:normal;left:-283px;width:600px;text-align:center;">7</div>
<div class="r" style="left:5px;top:491px;width:24px;height:1px;background:#bdbdbd;"></div>
<div class="t" style="top:476.84px;font-size:12px;color:#222;font-weight:normal;left:-283px;width:600px;text-align:center;">9</div>
<div class="r" style="left:5px;top:510px;width:24px;height:1px;background:#bdbdbd;"></div>
<div class="t" style="top:495.84px;font-size:12px;color:#222;font-weight:normal;left:-283px;width:600px;text-align:center;">10</div>
<div class="r" style="left:5px;top:529px;width:24px;height:1px;background:#bdbdbd;"></div>
<div class="t" style="top:514.84px;font-size:12px;color:#222;font-weight:normal;left:-283px;width:600px;text-align:center;">11</div>
<div class="r" style="left:5px;top:548px;width:24px;height:1px;background:#bdbdbd;"></div>
<div class="t" style="top:533.84px;font-size:12px;color:#222;font-weight:normal;left:-283px;width:600px;text-align:center;">12</div>
<div class="r" style="left:5px;top:567px;width:24px;height:1px;background:#bdbdbd;"></div>
<div class="t" style="top:552.84px;font-size:12px;color:#222;font-weight:normal;left:-283px;width:600px;text-align:center;">13</div>
<div class="r" style="left:5px;top:586px;width:24px;height:1px;background:#bdbdbd;"></div>
<div class="t" style="top:571.84px;font-size:12px;color:#222;font-weight:normal;left:-283px;width:600px;text-align:center;">14</div>
<div class="r" style="left:5px;top:605px;width:24px;height:1px;background:#bdbdbd;"></div>
<div class="t" style="top:590.84px;font-size:12px;color:#222;font-weight:normal;left:-283px;width:600px;text-align:center;">15</div>
<div class="r" style="left:5px;top:624px;width:24px;height:1px;background:#bdbdbd;"></div>
<div class="t" style="top:609.84px;font-size:12px;color:#222;font-weight:normal;left:-283px;width:600px;text-align:center;">16</div>
<div class="r" style="left:5px;top:643px;width:24px;height:1px;background:#bdbdbd;"></div>
<div class="t" style="top:628.84px;font-size:12px;color:#222;font-weight:normal;left:-283px;width:600px;text-align:center;">17</div>
<div class="r" style="left:5px;top:662px;width:24px;height:1px;background:#bdbdbd;"></div>
<div class="t" style="top:647.84px;font-size:12px;color:#222;font-weight:normal;left:-283px;width:600px;text-align:center;">18</div>
<div class="r" style="left:30px;top:292px;width:808px;height:1px;background:#d2d2d2;"></div>
<div class="r" style="left:30px;top:322px;width:808px;height:1px;background:#d2d2d2;"></div>
<div class="r" style="left:30px;top:352px;width:808px;height:1px;background:#d2d2d2;"></div>
<div class="r" style="left:30px;top:382px;width:808px;height:1px;background:#d2d2d2;"></div>
<div class="r" style="left:30px;top:412px;width:808px;height:1px;background:#d2d2d2;"></div>
<div class="r" style="left:30px;top:442px;width:808px;height:1px;background:#d2d2d2;"></div>
<div class="r" style="left:30px;top:471px;width:808px;height:1px;background:#d2d2d2;"></div>
<div class="r" style="left:30px;top:491px;width:808px;height:1px;background:#d2d2d2;"></div>
<div class="r" style="left:30px;top:510px;width:808px;height:1px;background:#d2d2d2;"></div>
<div class="r" style="left:30px;top:529px;width:808px;height:1px;background:#d2d2d2;"></div>
<div class="r" style="left:30px;top:548px;width:808px;height:1px;background:#d2d2d2;"></div>
<div class="r" style="left:30px;top:567px;width:808px;height:1px;background:#d2d2d2;"></div>
<div class="r" style="left:30px;top:586px;width:808px;height:1px;background:#d2d2d2;"></div>
<div class="r" style="left:30px;top:605px;width:808px;height:1px;background:#d2d2d2;"></div>
<div class="r" style="left:30px;top:624px;width:808px;height:1px;background:#d2d2d2;"></div>
<div class="r" style="left:30px;top:643px;width:808px;height:1px;background:#d2d2d2;"></div>
<div class="r" style="left:30px;top:662px;width:808px;height:1px;background:#d2d2d2;"></div>
<div class="r" style="left:191px;top:262px;width:1px;height:400px;background:#d2d2d2;"></div>
<div class="r" style="left:313px;top:262px;width:1px;height:400px;background:#d2d2d2;"></div>
<div class="r" style="left:429px;top:262px;width:1px;height:400px;background:#d2d2d2;"></div>
<div class="r" style="left:545px;top:262px;width:1px;height:400px;background:#d2d2d2;"></div>
<div class="r" style="left:661px;top:262px;width:1px;height:400px;background:#d2d2d2;"></div>
<div class="r" style="left:777px;top:262px;width:1px;height:400px;background:#d2d2d2;"></div>
<div class="r" style="left:838px;top:262px;width:1px;height:400px;background:#c6c6c6;"></div>
<div class="r" style="left:30px;top:263px;width:747px;height:29px;background:#ffffff;"></div>
<div class="t" style="top:268.22px;font-size:21px;color:#000;font-weight:bold;left:104.80000000000001px;width:600px;text-align:center;">Welcome</div>
<div class="r" style="left:30px;top:292px;width:747px;height:30px;background:#4472c4;"></div>
<div class="t" style="top:299.07px;font-size:20px;color:#ffffff;font-weight:bold;left:35px;">Region</div>
<div class="t" style="top:299.07px;font-size:20px;color:#ffffff;font-weight:bold;left:196px;">Jan</div>
<div class="t" style="top:299.07px;font-size:20px;color:#ffffff;font-weight:bold;left:318px;">Feb</div>
<div class="t" style="top:299.07px;font-size:20px;color:#ffffff;font-weight:bold;left:434px;">Mar</div>
<div class="t" style="top:299.07px;font-size:20px;color:#ffffff;font-weight:bold;left:550px;">Apr</div>
<div class="t" style="top:299.07px;font-size:20px;color:#ffffff;font-weight:bold;left:666px;">May</div>
<div class="r" style="left:30px;top:322px;width:747px;height:30px;background:#d9e1f2;"></div>
<div class="r" style="left:30px;top:352px;width:747px;height:1px;background:#a6b2c4;"></div>
<div class="t" style="top:328.57px;font-size:20px;color:#000;font-weight:normal;letter-spacing:0.8px;left:35px;">US</div>
<div class="t" style="top:328.57px;font-size:20px;color:#000;font-weight:normal;letter-spacing:0.6px;right:562px;">20000</div>
<div class="t" style="top:328.57px;font-size:20px;color:#000;font-weight:normal;letter-spacing:0.6px;right:446px;">22000</div>
<div class="t" style="top:328.57px;font-size:20px;color:#000;font-weight:normal;letter-spacing:0.6px;right:330px;">19000</div>
<div class="t" style="top:328.57px;font-size:20px;color:#000;font-weight:normal;letter-spacing:0.6px;right:214px;">23000</div>
<div class="t" style="top:328.57px;font-size:20px;color:#000;font-weight:normal;letter-spacing:0.6px;right:98px;">24000</div>
<div class="r" style="left:30px;top:382px;width:747px;height:1px;background:#a6b2c4;"></div>
<div class="t" style="top:358.57px;font-size:20px;color:#000;font-weight:normal;letter-spacing:0.8px;left:35px;">Europe</div>
<div class="t" style="top:358.57px;font-size:20px;color:#000;font-weight:normal;letter-spacing:0.6px;right:562px;">14500</div>
<div class="t" style="top:358.57px;font-size:20px;color:#000;font-weight:normal;letter-spacing:0.6px;right:446px;">14600</div>
<div class="t" style="top:358.57px;font-size:20px;color:#000;font-weight:normal;letter-spacing:0.6px;right:330px;">14500</div>
<div class="t" style="top:358.57px;font-size:20px;color:#000;font-weight:normal;letter-spacing:0.6px;right:214px;">14450</div>
<div class="t" style="top:358.57px;font-size:20px;color:#000;font-weight:normal;letter-spacing:0.6px;right:98px;">16000</div>
<div class="r" style="left:30px;top:382px;width:747px;height:30px;background:#d9e1f2;"></div>
<div class="r" style="left:30px;top:412px;width:747px;height:1px;background:#a6b2c4;"></div>
<div class="t" style="top:388.57px;font-size:20px;color:#000;font-weight:normal;letter-spacing:0.8px;left:35px;">Asia</div>
<div class="t" style="top:388.57px;font-size:20px;color:#000;font-weight:normal;letter-spacing:0.6px;right:562px;">26000</div>
<div class="t" style="top:388.57px;font-size:20px;color:#000;font-weight:normal;letter-spacing:0.6px;right:446px;">17000</div>
<div class="t" style="top:388.57px;font-size:20px;color:#000;font-weight:normal;letter-spacing:0.6px;right:330px;">18000</div>
<div class="t" style="top:388.57px;font-size:20px;color:#000;font-weight:normal;letter-spacing:0.6px;right:214px;">28000</div>
<div class="t" style="top:388.57px;font-size:20px;color:#000;font-weight:normal;letter-spacing:0.6px;right:98px;">30000</div>
<div class="r" style="left:30px;top:442px;width:747px;height:1px;background:#a6b2c4;"></div>
<div class="t" style="top:418.57px;font-size:20px;color:#000;font-weight:normal;letter-spacing:0.8px;left:35px;">South America</div>
<div class="t" style="top:418.57px;font-size:20px;color:#000;font-weight:normal;letter-spacing:0.6px;right:562px;">5000</div>
<div class="t" style="top:418.57px;font-size:20px;color:#000;font-weight:normal;letter-spacing:0.6px;right:446px;">3000</div>
<div class="t" style="top:418.57px;font-size:20px;color:#000;font-weight:normal;letter-spacing:0.6px;right:330px;">3500</div>
<div class="t" style="top:418.57px;font-size:20px;color:#000;font-weight:normal;letter-spacing:0.6px;right:214px;">6000</div>
<div class="t" style="top:418.57px;font-size:20px;color:#000;font-weight:normal;letter-spacing:0.6px;right:98px;">2000</div>
<div class="r" style="left:30px;top:472px;width:400px;height:19.5px;background:#16a262;"></div>
<div class="r" style="left:30px;top:472px;width:399.5px;height:57.5px;background:transparent;border:1.4px solid #111;"></div>
<div class="t" style="top:476.00px;font-size:13px;color:#dcf8e9;font-weight:bold;left:-188.5px;width:600px;text-align:center;">First Name</div>
<div class="t" style="top:476.00px;font-size:13px;color:#dcf8e9;font-weight:bold;left:-47.5px;width:600px;text-align:center;">Last Name</div>
<div class="t" style="top:476.00px;font-size:13px;color:#dcf8e9;font-weight:bold;left:72px;width:600px;text-align:center;">Age</div>
<div class="t" style="top:494.92px;font-size:12.5px;color:#111;font-weight:normal;left:33.5px;">Jill</div>
<div class="t" style="top:494.92px;font-size:12.5px;color:#111;font-weight:normal;letter-spacing:0.3px;left:194.5px;">Smith</div>
<div class="t" style="top:494.92px;font-size:12.5px;color:#111;font-weight:normal;right:444.5px;">50</div>
<div class="t" style="top:514.02px;font-size:12.5px;color:#111;font-weight:normal;left:33.5px;">Eve</div>
<div class="t" style="top:514.02px;font-size:12.5px;color:#111;font-weight:normal;letter-spacing:0.3px;left:194.5px;">Jackson</div>
<div class="t" style="top:514.02px;font-size:12.5px;color:#111;font-weight:normal;right:444.5px;">94</div>
<svg style="left:0;top:0" width="871" height="725" viewBox="0 0 871 725">
<path d="M2.8 503 C2.4 499.5 2.8 497.3 4.5 494 C6.2 490.7 9.3 486.7 13.2 483 C17.1 479.3 21.5 475.6 27.6 472 C33.7 468.4 39.7 464.9 49.7 461.3 C59.7 457.7 76.6 453.1 87.5 450.3 C98.4 447.5 105.8 446.1 115 444.5 C124.2 442.9 131.8 441.6 142.6 440.4 C153.4 439.2 165.5 437.9 180 437.2 C194.5 436.5 207.8 435.4 229.5 436 C251.2 436.6 289.9 439.3 310 441 C330.1 442.7 338.3 444.2 350 446 C361.7 447.8 370.9 449.6 380 451.6 C389.1 453.6 396.5 455.0 404.8 458.2 C413.1 461.4 422.2 466.2 429.7 470.6 C437.1 475.0 444.3 479.9 449.5 484.7 C454.7 489.5 459.4 494.9 461.1 499.6 C462.8 504.3 462.0 508.1 459.5 512.8 C457.0 517.5 451.2 523.6 446.2 527.7 C441.2 531.9 435.8 534.8 429.7 537.7 C423.6 540.6 418.1 542.6 409.8 545.1 C401.5 547.6 394.5 549.7 380 552.6 C365.5 555.5 348.1 560.0 323 562.5 C297.9 565.0 258.3 567.1 229.5 567.5 C200.7 567.9 168.2 565.6 150 564.6 C131.8 563.6 131.2 563.2 120 561.3 C108.8 559.4 93.4 555.9 82.6 553 C71.8 550.1 63.8 547.3 55.1 544.1 C46.4 540.9 36.7 536.8 30.3 533.7 C23.9 530.6 20.4 528.6 16.5 525.5 C12.6 522.4 9.2 519.0 6.9 515.2 C4.6 511.5 3.2 506.5 2.8 503 Z" fill="none" stroke="#de1f2d" stroke-width="4.4"/>
<path d="M410 544.6 L441.8 565.7" stroke="#de1f2d" stroke-width="4.4" stroke-linecap="round"/>
</svg>
<div class="t" style="top:559.67px;font-size:28.5px;color:#c8273a;font-weight:normal;letter-spacing:1.0px;left:444.5px;">Added table!</div>
<div class="r" style="left:839px;top:240px;width:25px;height:422px;background:#e6e6e6;"></div>
<div class="r" style="left:842px;top:245px;width:19px;height:19px;background:#fdfdfd;border:1px solid #c6c6c6;"></div>
<svg style="left:846px;top:251px" width="11" height="6" viewBox="0 0 11 6"><path d="M0.5 5.5 L5.5 0.5 L10.5 5.5 Z" fill="#777"/></svg>
<div class="r" style="left:842px;top:263px;width:19px;height:343px;background:#ffffff;border:1px solid #c6c6c6;"></div>
<div class="r" style="left:842px;top:645px;width:19px;height:17px;background:#fdfdfd;border:1px solid #c6c6c6;"></div>
<svg style="left:846px;top:651px" width="11" height="6" viewBox="0 0 11 6"><path d="M0.5 0.5 L5.5 5.5 L10.5 0.5 Z" fill="#777"/></svg>
<div class="r" style="left:5px;top:662px;width:859px;height:30px;background:#e6e6e6;"></div>
<div class="r" style="left:5px;top:662px;width:833px;height:1px;background:#9b9b9b;"></div>
<svg style="left:31px;top:672px" width="6" height="10" viewBox="0 0 6 10"><path d="M5.5 0.5 L0.5 5 L5.5 9.5 Z" fill="#c0c0c0"/></svg>
<svg style="left:60px;top:672px" width="6" height="10" viewBox="0 0 6 10"><path d="M0.5 0.5 L5.5 5 L0.5 9.5 Z" fill="#c0c0c0"/></svg>
<div class="r" style="left:107px;top:662px;width:84px;height:27px;background:#ffffff;border-left:1px solid #c6c6c6;border-right:1px solid #c6c6c6;"></div>
<div class="r" style="left:107px;top:687px;width:84px;height:2px;background:#1e6b42;"></div>
<div class="r" style="left:107px;top:662px;width:84px;height:1px;background:#9b9b9b;"></div>
<div class="t" style="top:666.96px;font-size:16px;color:#2a6e48;font-weight:bold;left:119.5px;">Sheet 1</div>
<svg style="left:223px;top:668px" width="21" height="21" viewBox="0 0 21 21"><circle cx="10.5" cy="10.5" r="9.3" fill="none" stroke="#777" stroke-width="1.5"/><path d="M10.5 5 V16 M5 10.5 H16" stroke="#777" stroke-width="1.6"/></svg>
<div class="r" style="left:517px;top:670px;width:2px;height:3px;background:#a6a6a6;"></div>
<div class="r" style="left:517px;top:675px;width:2px;height:3px;background:#a6a6a6;"></div>
<div class="r" style="left:517px;top:680px;width:2px;height:3px;background:#a6a6a6;"></div>
<div class="r" style="left:535px;top:668px;width:303px;height:18px;background:#ffffff;border:1px solid #c6c6c6;"></div>
<div class="r" style="left:786px;top:669px;width:34px;height:16px;background:#e2e2e2;"></div>
<div class="r" style="left:554px;top:669px;width:1px;height:16px;background:#c6c6c6;"></div>
<div class="r" style="left:820px;top:669px;width:1px;height:16px;background:#c6c6c6;"></div>
<svg style="left:541px;top:672px" width="6" height="10" viewBox="0 0 6 10"><path d="M5.5 0.5 L0.5 5 L5.5 9.5 Z" fill="#555"/></svg>
<svg style="left:826px;top:672px" width="6" height="10" viewBox="0 0 6 10"><path d="M0.5 0.5 L5.5 5 L0.5 9.5 Z" fill="#555"/></svg>
<div class="r" style="left:5px;top:691px;width:859px;height:28px;background:#f1f1f1;border-top:1px solid #d4d4d4;"></div>
<div class="t" style="top:699.00px;font-size:13px;color:#444;font-weight:normal;letter-spacing:-0.3px;left:11.3px;">Ready</div>
<div class="r" style="left:510px;top:692px;width:41px;height:27px;background:#d4d4d4;"></div>
<svg style="left:522px;top:698px" width="15" height="14" viewBox="0 0 15 14"><path d="M0.5 0.5 H14.5 V13.5 H0.5 Z M0.5 4.8 H14.5 M0.5 9.2 H14.5 M5.2 0.5 V13.5 M9.8 0.5 V13.5" fill="none" stroke="#555" stroke-width="1"/></svg>
<svg style="left:562px;top:698px" width="15" height="14" viewBox="0 0 15 14"><path d="M0.5 0.5 H14.5 V13.5 H0.5 Z M3 3 H12 V11 H3 Z M4.5 5 H10.5 M4.5 7 H10.5 M4.5 9 H10.5" fill="none" stroke="#555" stroke-width="1"/></svg>
<svg style="left:603px;top:698px" width="15" height="14" viewBox="0 0 15 14"><path d="M0.5 0.5 H14.5 V13.5 H0.5 Z M4 0.5 V7 H10 V0.5" fill="none" stroke="#555" stroke-width="1"/></svg>
<div class="r" style="left:637px;top:704px;width:10px;height:2px;background:#444;"></div>
<div class="r" style="left:650px;top:705px;width:125px;height:1px;background:#a0a0a0;"></div>
<div class="r" style="left:697px;top:698px;width:7px;height:15px;background:#555;"></div>
<div class="r" style="left:712px;top:701px;width:1px;height:8px;background:#a0a0a0;"></div>
<svg style="left:778px;top:699px" width="12" height="12" viewBox="0 0 12 12"><path d="M6 0 V12 M0 6 H12" stroke="#444" stroke-width="2"/></svg>
<div class="t" style="top:700.00px;font-size:13px;color:#444;font-weight:normal;left:806px;">80 %</div>
</body></html>
